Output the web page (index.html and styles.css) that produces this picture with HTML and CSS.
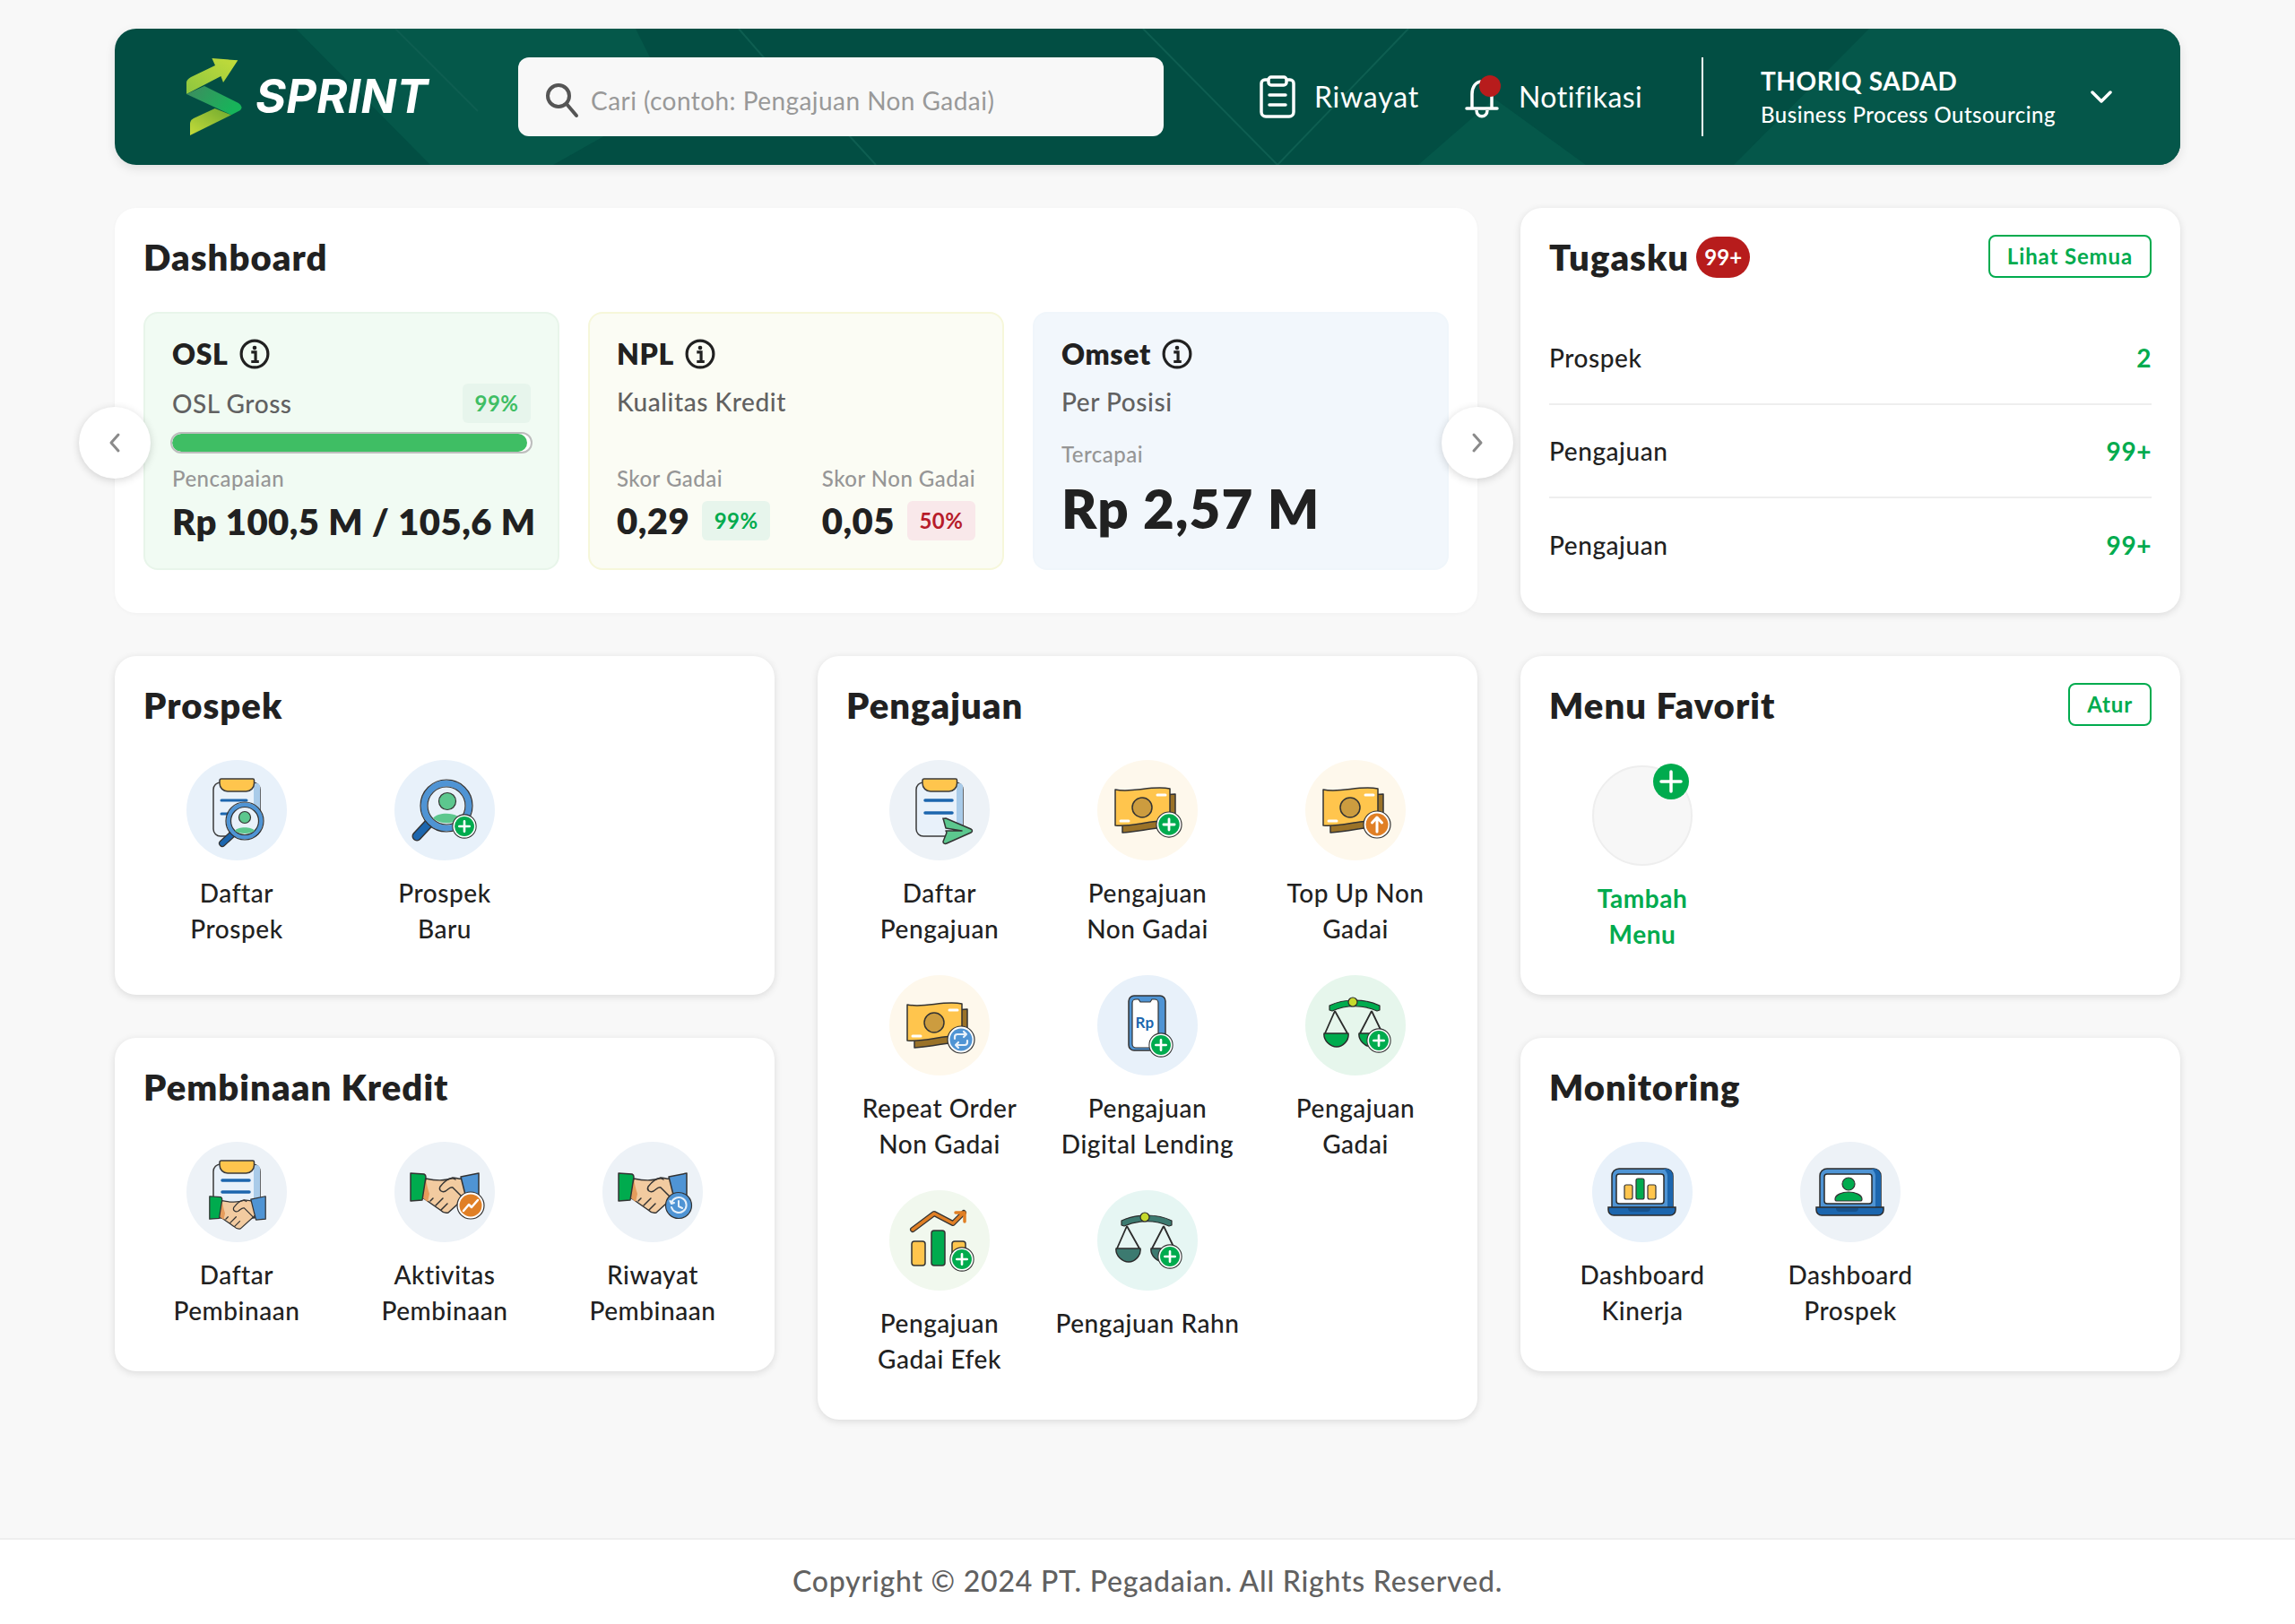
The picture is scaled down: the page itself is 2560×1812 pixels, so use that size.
FILE: index.html
```html
<!DOCTYPE html>
<html lang="id">
<head>
<meta charset="utf-8">
<title>SPRINT</title>
<link rel="stylesheet" href="styles.css">
</head>
<body>
<svg class="defs" width="0" height="0" aria-hidden="true">
  <defs>
    <linearGradient id="gA" x1="0" y1="1" x2="1" y2="0"><stop offset="0" stop-color="#8cc63f"/><stop offset="1" stop-color="#c4dc3a"/></linearGradient>
    <linearGradient id="gB" x1="0" y1="0" x2="1" y2="0.4"><stop offset="0" stop-color="#3f8a5f"/><stop offset="1" stop-color="#17b45a"/></linearGradient>
    <linearGradient id="gC" x1="1" y1="0" x2="0" y2="1"><stop offset="0" stop-color="#6fa92f"/><stop offset="1" stop-color="#c4dc3a"/></linearGradient>

    <symbol id="clip" viewBox="0 0 112 112">
      <rect x="30" y="25" width="52" height="60" rx="8" fill="#e8f1fa" stroke="#3a3a3a" stroke-width="1.5"/>
      <path d="M75 26h3a4 4 0 0 1 4 4v47a7 7 0 0 1-7 7z" fill="#a9cbe9"/>
      <path d="M39 21h35a1.500 1.500 0 0 1 1.500 1.500V26a9 9 0 0 1-9 9H46a9 9 0 0 1-9-9v-3a2 2 0 0 1 2-2z" fill="#ffc54d" stroke="#3a3a3a" stroke-width="1.500"/>
    </symbol>

    <symbol id="plus" viewBox="0 0 32 32">
      <circle cx="16" cy="16" r="15" fill="#fff" stroke="#333" stroke-width="1.200"/>
      <circle cx="16" cy="16" r="12.500" fill="#00ab4e"/>
      <path d="M16 9.500v13M9.500 16h13" stroke="#fff" stroke-width="3" stroke-linecap="round"/>
    </symbol>

    <symbol id="money" viewBox="0 0 112 112">
      <path d="M28 42l59-4v36c-18 0-38 6-59 7z" fill="#9a7228" stroke="#333" stroke-width="1.500" stroke-linejoin="round"/>
      <path d="M20 33c20 4 40-5 61-1v36c-20-2-40 7-61 5z" fill="#ffc54d" stroke="#333" stroke-width="1.500" stroke-linejoin="round"/>
      <ellipse cx="50" cy="53" rx="11" ry="11" fill="#cc9c3f" stroke="#333" stroke-width="1.500"/>
      <path d="M67 39h9M26 68h9" stroke="#fff" stroke-width="3" stroke-linecap="round"/>
    </symbol>

    <symbol id="hands" viewBox="0 0 112 112">
      <path d="M35 41c14 3 24 2 30-1 4 0 8 2 11 1l6 18-22 20c-4 1-7-1-9-3L31 62z" fill="#f2cba0" stroke="#333" stroke-width="1.500" stroke-linejoin="round"/>
      <path d="M35 42l-4 20 6 5 2-9c-2-6-3-11-4-16z" fill="#e59c5c"/>
      <path d="M68 42c-6-4-13 3-17 8-2 4 2 7 6 5 3-2 5-5 8-4l13 13M52 76l7-7M46 71l8-8M40 66l3-3" fill="none" stroke="#333" stroke-width="1.500" stroke-linecap="round" stroke-linejoin="round"/>
      <path d="M18 35l15 1c2 1 2 2 2 3l-4 26-13 1z" fill="#00ab4e" stroke="#333" stroke-width="1.500" stroke-linejoin="round"/>
      <path d="M74 39l20-4v31l-13 1z" fill="#4f94d4" stroke="#333" stroke-width="1.500" stroke-linejoin="round"/>
    </symbol>

    <symbol id="scale" viewBox="0 0 112 112">
      <path d="M33 40l-11 25M33 40l14 25M74 40l-13 25M74 40l12 25" fill="none" stroke="#2b2b2b" stroke-width="1.800"/>
      <path d="M27 34c16-8 40-8 56 0v5l-3 1c-15-7-35-7-50 0l-3-1z" fill="currentColor" stroke="#2b2b2b" stroke-width="1.200" stroke-linejoin="round"/>
      <circle cx="53" cy="30" r="5" fill="#c5d92d" stroke="#2b2b2b" stroke-width="1.200"/>
      <path d="M21 65h27c1 8-6 15-13 15s-15-7-14-15zM60 65h27c1 8-6 15-13 15s-15-7-14-15z" fill="currentColor" stroke="#2b2b2b" stroke-width="1.500" stroke-linejoin="round"/>
    </symbol>

    <symbol id="laptop" viewBox="0 0 112 112">
      <path d="M30 30h52a8 8 0 0 1 8 8v36H22V38a8 8 0 0 1 8-8z" fill="#4f94d4" stroke="#2b2b2b" stroke-width="1.500"/>
      <path d="M80 30h2a8 8 0 0 1 8 8v36h-6V38c0-3-2-6-4-8z" fill="#1c66ae"/>
      <rect x="27" y="36" width="53" height="33" rx="3" fill="#fff" stroke="#2b2b2b" stroke-width="1.500"/>
      <path d="M18 73h75v3a6 6 0 0 1-6 6H24a6 6 0 0 1-6-6z" fill="#1c66ae" stroke="#2b2b2b" stroke-width="1.500"/>
      <path d="M40 74h25c0 3-2 4-4 4H44c-2 0-4-1-4-4z" fill="#17528c"/>
    </symbol>
  </defs>
</svg>

<header class="topbar">
  <svg class="topbar-art" viewBox="0 0 2304 152" preserveAspectRatio="none" aria-hidden="true">
    <path d="M202 0H581L620 78 489 152H352z" fill="#05584a"/>
    <path d="M1454 152L1539 78 1641 152z" fill="#05584a"/>
    <path d="M1806 152L1957 0H2304V152z" fill="#05574a"/>
    <path d="M313 0l92 92M696 0l40 46M1147 0l150 152 146-152M818 118l31 34" fill="none" stroke="#0e5e51" stroke-width="2"/>
  </svg>
  <a class="logo">
    <svg class="logo-mark" viewBox="0 0 64 86" aria-hidden="true">
      <path d="M0 40V27Q0 24 5 21L32 8 28.400 0 57.300 2.300 41 27 38.400 20z" fill="url(#gA)"/>
      <path d="M0 40L20 31 58 50Q64 54 60 58L50 63.300z" fill="url(#gB)"/>
      <path d="M4 86V73Q4 69 8 67L31.700 56 50 63.300z" fill="url(#gC)"/>
    </svg>
    <span class="logo-text">SPRINT</span>
  </a>
  <label class="search">
    <svg class="search-icon" viewBox="0 0 38 40" aria-hidden="true">
      <circle cx="15" cy="15" r="12" fill="none" stroke="#555" stroke-width="4"/>
      <path d="M24 24l11 13" stroke="#555" stroke-width="4" stroke-linecap="round"/>
    </svg>
    <span class="search-hint">Cari (contoh: Pengajuan Non Gadai)</span>
  </label>
  <nav class="nav">
    <a class="nav-link">
      <svg class="nav-ic" viewBox="0 0 40 48" aria-hidden="true">
        <path d="M10 5H6a4 4 0 0 0-4 4v32a5 5 0 0 0 5 5h26a5 5 0 0 0 5-5V9a4 4 0 0 0-4-4h-4" fill="none" stroke="#fff" stroke-width="3.500"/>
        <rect x="10" y="2" width="20" height="9" rx="3" fill="none" stroke="#fff" stroke-width="3.500"/>
        <path d="M11 22h18M11 33h18" stroke="#fff" stroke-width="3.500" stroke-linecap="round"/>
      </svg>
      Riwayat
    </a>
    <a class="nav-link nav-link-bell">
      <span class="bell">
        <svg class="nav-ic" viewBox="0 0 40 48" aria-hidden="true">
          <path d="M9 37V21c0-8 4-14 11-14s11 6 11 14v16" fill="none" stroke="#fff" stroke-width="3.500"/>
          <path d="M3 37h34" stroke="#fff" stroke-width="3.500" stroke-linecap="round"/>
          <path d="M14 39c0 9 12 9 12 0" fill="none" stroke="#fff" stroke-width="3.500"/>
        </svg>
        <i class="bell-dot"></i>
      </span>
      Notifikasi
    </a>
  </nav>
  <div class="user">
    <div class="user-text">
      <div class="user-name">THORIQ SADAD</div>
      <div class="user-unit">Business Process Outsourcing</div>
    </div>
    <svg class="chev" viewBox="0 0 24 14" aria-hidden="true"><path d="M2 2l10 10L22 2" fill="none" stroke="#fff" stroke-width="3.500" stroke-linecap="round" stroke-linejoin="round"/></svg>
  </div>
</header>

<main class="board">
  <section class="card card-flat dash">
    <h2 class="card-title">Dashboard</h2>
    <button class="pager pager-l" aria-label="Sebelumnya"><svg viewBox="0 0 14 24"><path d="M11 3L3 12l8 9" fill="none" stroke="#8a8a8a" stroke-width="3" stroke-linecap="round" stroke-linejoin="round"/></svg></button>
    <button class="pager pager-r" aria-label="Berikutnya"><svg viewBox="0 0 14 24"><path d="M3 3l8 9-8 9" fill="none" stroke="#8a8a8a" stroke-width="3" stroke-linecap="round" stroke-linejoin="round"/></svg></button>
    <div class="metrics">
      <article class="metric metric-green">
        <h3 class="metric-title">OSL <svg class="info" viewBox="0 0 32 32"><circle cx="16" cy="16" r="14" fill="none" stroke="#212121" stroke-width="3"/><circle cx="16" cy="9.500" r="2.200" fill="#212121"/><path d="M12.500 14H17v10M12.500 24h8" fill="none" stroke="#212121" stroke-width="3"/></svg></h3>
        <div class="metric-row"><span class="metric-sub">OSL Gross</span><span class="pct pct-ok pct-light">99%</span></div>
        <div class="bar"><div class="bar-fill" style="width:99%"></div></div>
        <div class="metric-cap cap-osl">Pencapaian</div>
        <div class="metric-val">Rp 100,5 M / 105,6 M</div>
      </article>
      <article class="metric metric-yellow">
        <h3 class="metric-title">NPL <svg class="info" viewBox="0 0 32 32"><circle cx="16" cy="16" r="14" fill="none" stroke="#212121" stroke-width="3"/><circle cx="16" cy="9.500" r="2.200" fill="#212121"/><path d="M12.500 14H17v10M12.500 24h8" fill="none" stroke="#212121" stroke-width="3"/></svg></h3>
        <div class="metric-sub metric-sub-top">Kualitas Kredit</div>
        <div class="scores">
          <div class="score">
            <div class="metric-cap">Skor Gadai</div>
            <div class="score-row"><span class="metric-val">0,29</span><span class="pct pct-ok">99%</span></div>
          </div>
          <div class="score">
            <div class="metric-cap">Skor Non Gadai</div>
            <div class="score-row"><span class="metric-val">0,05</span><span class="pct pct-bad">50%</span></div>
          </div>
        </div>
      </article>
      <article class="metric metric-blue">
        <h3 class="metric-title">Omset <svg class="info" viewBox="0 0 32 32"><circle cx="16" cy="16" r="14" fill="none" stroke="#212121" stroke-width="3"/><circle cx="16" cy="9.500" r="2.200" fill="#212121"/><path d="M12.500 14H17v10M12.500 24h8" fill="none" stroke="#212121" stroke-width="3"/></svg></h3>
        <div class="metric-sub metric-sub-top">Per Posisi</div>
        <div class="metric-cap cap-omset">Tercapai</div>
        <div class="metric-big">Rp 2,57 M</div>
      </article>
    </div>
  </section>

  <section class="card tasks">
    <div class="card-head">
      <h2 class="card-title">Tugasku <span class="count">99+</span></h2>
      <a class="btn-line">Lihat Semua</a>
    </div>
    <ul class="task-list">
      <li class="task"><span>Prospek</span><b>2</b></li>
      <li class="task"><span>Pengajuan</span><b>99+</b></li>
      <li class="task"><span>Pengajuan</span><b>99+</b></li>
    </ul>
  </section>

  <section class="card prospek">
    <h2 class="card-title">Prospek</h2>
    <div class="menu">
      <a class="item"><span class="icon bg-blue"><svg viewBox="0 0 112 112">
        <use href="#clip"/>
        <path d="M39 45h28M39 60h10" stroke="#1c66ae" stroke-width="3" stroke-linecap="round"/>
        <path d="M52 82L40 93" stroke="#333" stroke-width="8" stroke-linecap="round"/><path d="M52 82L40 93" stroke="#1c66ae" stroke-width="5.500" stroke-linecap="round"/>
        <circle cx="65" cy="68" r="18" fill="#e8f1fa" stroke="#4f94d4" stroke-width="5"/><circle cx="65" cy="68" r="21" fill="none" stroke="#333" stroke-width="1.200"/><circle cx="65" cy="68" r="15.500" fill="none" stroke="#333" stroke-width="1.200"/>
        <circle cx="65" cy="64" r="6.500" fill="#5cc78e" stroke="#333" stroke-width="1.200"/>
        <path d="M54 79c3-5 19-5 22 0-5 4-17 4-22 0z" fill="#5cc78e"/>
      </svg></span><span class="item-label">Daftar<br>Prospek</span></a>
      <a class="item"><span class="icon bg-blue"><svg viewBox="0 0 112 112">
        <path d="M38 71L25 85" stroke="#333" stroke-width="11" stroke-linecap="round"/><path d="M38 71L25 85" stroke="#1c66ae" stroke-width="8" stroke-linecap="round"/>
        <circle cx="58" cy="51" r="25" fill="#e8f1fa" stroke="#4f94d4" stroke-width="7"/><circle cx="58" cy="51" r="29" fill="none" stroke="#333" stroke-width="1.200"/><circle cx="58" cy="51" r="21" fill="none" stroke="#333" stroke-width="1.200"/>
        <circle cx="59" cy="46" r="9.500" fill="#5cc78e" stroke="#333" stroke-width="1.200"/>
        <path d="M43 65c5-7 25-7 30 0-8 7-22 7-30 0z" fill="#5cc78e"/>
        <use href="#plus" x="64" y="60" width="28" height="28"/>
      </svg></span><span class="item-label">Prospek<br>Baru</span></a>
    </div>
  </section>

  <section class="card pengajuan">
    <h2 class="card-title">Pengajuan</h2>
    <div class="menu">
      <a class="item"><span class="icon bg-slate"><svg viewBox="0 0 112 112">
        <use href="#clip"/>
        <path d="M40 45h30M40 59h30" stroke="#1c66ae" stroke-width="3.500" stroke-linecap="round"/>
        <path d="M60 66c1-1 2-1 3-1l28 12c2 1 2 3 0 4L64 93c-2 1-4 0-4-2l4-10-1-2h18l-18-3-3-11z" fill="#5cc78e" stroke="#333" stroke-width="1.500" stroke-linejoin="round"/>
      </svg></span><span class="item-label">Daftar<br>Pengajuan</span></a>
      <a class="item"><span class="icon bg-cream"><svg viewBox="0 0 112 112">
        <use href="#money"/><use href="#plus" x="65" y="57" width="30" height="30"/>
      </svg></span><span class="item-label">Pengajuan<br>Non Gadai</span></a>
      <a class="item"><span class="icon bg-cream"><svg viewBox="0 0 112 112">
        <use href="#money"/>
        <circle cx="80" cy="72" r="15" fill="#fff" stroke="#333" stroke-width="1.200"/><circle cx="80" cy="72" r="12.500" fill="#e07f25"/>
        <path d="M80 80V65M74.500 70l5.500-6 5.500 6" fill="none" stroke="#fff" stroke-width="3" stroke-linecap="round" stroke-linejoin="round"/>
      </svg></span><span class="item-label">Top Up Non<br>Gadai</span></a>
      <a class="item"><span class="icon bg-cream"><svg viewBox="0 0 112 112">
        <use href="#money"/>
        <circle cx="80" cy="72" r="15" fill="#fff" stroke="#333" stroke-width="1.200"/><circle cx="80" cy="72" r="12.500" fill="#4f94d4"/>
        <path d="M73 71v-2a3 3 0 0 1 3-3h10M83 63l3 3-3 3M87 73v2a3 3 0 0 1-3 3H74M77 81l-3-3 3-3" fill="none" stroke="#e8f1fa" stroke-width="2.200" stroke-linecap="round" stroke-linejoin="round"/>
      </svg></span><span class="item-label">Repeat Order<br>Non Gadai</span></a>
      <a class="item"><span class="icon bg-blue"><svg viewBox="0 0 112 112">
        <rect x="35" y="23" width="41" height="61" rx="6" fill="#4f94d4" stroke="#333" stroke-width="1.500"/>
        <path d="M43 27h3l2 3h11l2-3h3a4 4 0 0 1 4 4v46a4 4 0 0 1-4 4H43a4 4 0 0 1-4-4V31a4 4 0 0 1 4-4z" fill="#fff" stroke="#333" stroke-width="1.200"/>
        <text class="rp" x="53" y="59" text-anchor="middle">Rp</text>
        <use href="#plus" x="57" y="64" width="28" height="28"/>
      </svg></span><span class="item-label">Pengajuan<br>Digital Lending</span></a>
      <a class="item"><span class="icon bg-green"><svg viewBox="0 0 112 112">
        <use href="#scale" class="c-green"/><use href="#plus" x="68" y="59" width="28" height="28"/>
      </svg></span><span class="item-label">Pengajuan<br>Gadai</span></a>
      <a class="item"><span class="icon bg-lime"><svg viewBox="0 0 112 112">
        <path d="M26 44l24-18 21 11 12-12" fill="none" stroke="#333" stroke-width="6" stroke-linecap="round" stroke-linejoin="round"/>
        <path d="M26 44l24-18 21 11 12-12M74 25h10v10" fill="none" stroke="#e07f25" stroke-width="3.500" stroke-linecap="round" stroke-linejoin="round"/>
        <rect x="25" y="57" width="15" height="27" rx="3" fill="#ffc54d" stroke="#333" stroke-width="1.500"/>
        <rect x="47" y="45" width="15" height="39" rx="3" fill="#00ab4e" stroke="#333" stroke-width="1.500"/>
        <rect x="70" y="57" width="15" height="27" rx="3" fill="#ffc54d" stroke="#333" stroke-width="1.500"/>
        <use href="#plus" x="67" y="63" width="28" height="28"/>
      </svg></span><span class="item-label">Pengajuan<br>Gadai Efek</span></a>
      <a class="item"><span class="icon bg-teal"><svg viewBox="0 0 112 112">
        <use href="#scale" class="c-teal"/><use href="#plus" x="67" y="60" width="28" height="28"/>
      </svg></span><span class="item-label">Pengajuan Rahn</span></a>
    </div>
  </section>

  <section class="card favorit">
    <div class="card-head">
      <h2 class="card-title">Menu Favorit</h2>
      <a class="btn-line">Atur</a>
    </div>
    <div class="menu">
      <a class="item item-add"><span class="icon icon-empty"><svg class="add-badge" viewBox="0 0 40 40"><circle cx="20" cy="20" r="20" fill="#00ab4e"/><path d="M20 9v22M9 20h22" stroke="#fff" stroke-width="3.500" stroke-linecap="round"/></svg></span><span class="item-label">Tambah<br>Menu</span></a>
    </div>
  </section>

  <section class="card pembinaan">
    <h2 class="card-title">Pembinaan Kredit</h2>
    <div class="menu">
      <a class="item"><span class="icon bg-slate"><svg viewBox="0 0 112 112">
        <use href="#clip"/>
        <path d="M40 43h30M40 56h30" stroke="#1c66ae" stroke-width="3.500" stroke-linecap="round"/>
        <use href="#hands" x="11" y="32" width="92" height="92"/>
      </svg></span><span class="item-label">Daftar<br>Pembinaan</span></a>
      <a class="item"><span class="icon bg-slate"><svg viewBox="0 0 112 112">
        <use href="#hands"/>
        <circle cx="85" cy="71" r="15" fill="#fff" stroke="#333" stroke-width="1.200"/><circle cx="85" cy="71" r="12.500" fill="#e07f25"/>
        <path d="M77 77l6-7 3 3 7-8" fill="none" stroke="#fff" stroke-width="2.500" stroke-linecap="round" stroke-linejoin="round"/>
      </svg></span><span class="item-label">Aktivitas<br>Pembinaan</span></a>
      <a class="item"><span class="icon bg-slate"><svg viewBox="0 0 112 112">
        <use href="#hands"/>
        <circle cx="85" cy="71" r="14.500" fill="#4f94d4" stroke="#333" stroke-width="1.200"/>
        <path d="M77 68a8.500 8.500 0 1 1 0 5M85 66v6l4 2M75.500 66l1.500 3 3-1" fill="none" stroke="#e8f1fa" stroke-width="2" stroke-linecap="round" stroke-linejoin="round"/>
      </svg></span><span class="item-label">Riwayat<br>Pembinaan</span></a>
    </div>
  </section>

  <section class="card monitoring">
    <h2 class="card-title">Monitoring</h2>
    <div class="menu">
      <a class="item"><span class="icon bg-blue"><svg viewBox="0 0 112 112">
        <use href="#laptop"/>
        <rect x="36" y="48" width="9" height="16" rx="2" fill="#ffc54d" stroke="#333" stroke-width="1.200"/>
        <rect x="49" y="41" width="9" height="23" rx="2" fill="#00ab4e" stroke="#333" stroke-width="1.200"/>
        <rect x="62" y="48" width="9" height="16" rx="2" fill="#ffc54d" stroke="#333" stroke-width="1.200"/>
      </svg></span><span class="item-label">Dashboard<br>Kinerja</span></a>
      <a class="item"><span class="icon bg-slate"><svg viewBox="0 0 112 112">
        <use href="#laptop"/>
        <circle cx="54" cy="47" r="7" fill="#00ab4e" stroke="#333" stroke-width="1.200"/>
        <path d="M39 64c0-5 8-8 15-8s15 3 15 8c0 1-1 2-2 2H41c-1 0-2-1-2-2z" fill="#00ab4e" stroke="#333" stroke-width="1.200"/>
      </svg></span><span class="item-label">Dashboard<br>Prospek</span></a>
    </div>
  </section>
</main>

<footer class="footer">Copyright © 2024 PT. Pegadaian. All Rights Reserved.</footer>
</body>
</html>
```
FILE: styles.css
```css
* { box-sizing: border-box; letter-spacing: .02em; }
html, body { margin: 0; padding: 0; }
body {
  min-height: 1812px;
  display: flex;
  flex-direction: column;
  background: #f8f8f8;
  color: #212121;
  font-family: "Lato", "Noto Sans", sans-serif;
  font-size: 28px;
  font-weight: 500;
}
a { color: inherit; text-decoration: none; }
.defs { position: absolute; }

/* top bar */
.topbar {
  position: relative;
  overflow: hidden;
  display: flex;
  align-items: center;
  height: 152px;
  margin: 32px 128px 0;
  padding-left: 80px;
  background: #024e43;
  border-radius: 24px;
  color: #fff;
  box-shadow: 0 4px 12px rgba(0, 0, 0, .1);
}
.topbar-art { position: absolute; inset: 0; width: 100%; height: 100%; }
.logo { position: relative; flex: 0 0 370px; display: flex; align-items: center; gap: 13px; }
.logo-mark { width: 64px; height: 86px; }
.logo-text {
  font-family: "Inter", sans-serif;
  font-size: 52px;
  font-weight: 700;
  font-style: italic;
  letter-spacing: .005em;
  line-height: 1;
}
.search {
  position: relative;
  flex: 0 0 720px;
  height: 88px;
  display: flex;
  align-items: center;
  gap: 13px;
  padding: 8px 0 0 30px;
  background: #f8f8f8;
  border-radius: 12px;
}
.search-icon { width: 38px; height: 40px; }
.search-hint { color: #999; font-size: 28px; font-weight: 400; letter-spacing: .016em; }
.nav { position: relative; display: flex; margin-left: 107px; }
.nav-link { display: flex; align-items: center; gap: 21px; font-size: 32px; line-height: 48px; font-weight: 400; letter-spacing: .025em; }
.nav-link-bell { margin-left: 50px; letter-spacing: .015em; }
.nav-ic { display: block; width: 40px; height: 48px; }
.bell { position: relative; display: block; }
.bell-dot {
  position: absolute;
  top: 0;
  left: 17px;
  width: 24px;
  height: 24px;
  border-radius: 50%;
  background: #b71c1c;
}
.user {
  position: absolute;
  left: 1770px;
  top: 32px;
  height: 88px;
  width: 534px;
  display: flex;
  align-items: center;
  padding-left: 64px;
  border-left: 2px solid #fff;
}
.user-text { flex: 0 0 368px; }
.user-name { font-size: 28px; font-weight: 700; line-height: 40px; }
.user-unit { font-size: 24px; line-height: 36px; }
.chev { width: 24px; height: 14px; }

/* board */
.board {
  display: grid;
  grid-template-columns: repeat(3, 736px);
  grid-template-rows: auto auto auto 1fr;
  gap: 48px;
  margin: 48px 128px 0;
  align-items: stretch;
}
.card {
  position: relative;
  padding: 32px;
  background: #fff;
  border-radius: 24px;
  box-shadow: 0 2px 8px rgba(0, 0, 0, .12);
}
.card-flat { box-shadow: 0 1px 4px rgba(0, 0, 0, .03); }
.dash { grid-column: 1 / span 2; grid-row: 1; }
.tasks { grid-column: 3; grid-row: 1; padding-bottom: 24px; }
.prospek { grid-column: 1; grid-row: 2; }
.pengajuan { grid-column: 2; grid-row: 2 / span 3; }
.favorit { grid-column: 3; grid-row: 2; }
.pembinaan { grid-column: 1; grid-row: 3; }
.monitoring { grid-column: 3; grid-row: 3; }

.card-title {
  display: flex;
  align-items: center;
  gap: 8px;
  margin: 0 0 38px;
  font-size: 40px;
  font-weight: 800;
  line-height: 46px;
  letter-spacing: .026em;
}
.card-head { display: flex; justify-content: space-between; align-items: flex-start; }
.btn-line {
  height: 48px;
  margin-top: -2px;
  padding: 0 19px;
  border: 2px solid #00ab4e;
  border-radius: 8px;
  color: #00ab4e;
  font-size: 24px;
  font-weight: 700;
  line-height: 44px;
  letter-spacing: .036em;
}
.count {
  padding: 0 8px;
  height: 46px;
  min-width: 60px;
  border-radius: 23px;
  background: #b71c1c;
  color: #fff;
  font-size: 24px;
  font-weight: 700;
  line-height: 46px;
  letter-spacing: 0;
  text-align: center;
}

/* dashboard metrics */
.metrics { display: grid; grid-template-columns: repeat(3, 464px); gap: 32px; }
.metric { height: 288px; padding: 26px 30px; border-radius: 16px; border: 2px solid transparent; }
.metric-green { background: #f1fbf3; border-color: #e8f5ea; }
.metric-yellow { background: #fbfcf4; border-color: #f6f7da; }
.metric-blue { background: #f2f7fc; border-color: #f0f6fb; }
.metric-title {
  display: flex;
  align-items: center;
  gap: 12px;
  margin: 0;
  font-size: 32px;
  font-weight: 800;
  line-height: 38px;
}
.info { width: 34px; height: 34px; }
.metric-row { display: flex; justify-content: space-between; align-items: center; height: 44px; margin-top: 14px; }
.metric-sub { color: #616161; font-size: 28px; line-height: 40px; }
.metric-sub-top { margin-top: 14px; }
.pct { flex: 0 0 76px; height: 44px; border-radius: 6px; font-size: 24px; font-weight: 700; line-height: 44px; text-align: center; }
.pct-ok { background: #e7f5ec; color: #00ab4e; }
.pct-light { color: #3fbe64; }
.pct-bad { background: #f9e8ea; color: #b71c2a; }
.bar { height: 24px; margin: 10px -2px 0; border: 2px solid #bdbdbd; border-radius: 12px; background: #fff; overflow: hidden; }
.bar-fill { height: 100%; background: #3fbe64; border-radius: 10px; }
.metric-cap { color: #969696; font-size: 24px; line-height: 32px; }
.cap-osl { margin-top: 12px; }
.cap-omset { margin-top: 23px; }
.metric-val { display: block; font-size: 40px; font-weight: 800; line-height: 48px; margin-top: 8px; letter-spacing: .012em; white-space: nowrap; }
.metric-big { font-size: 60px; font-weight: 800; line-height: 76px; margin-top: 6px; white-space: nowrap; }
.scores { display: flex; justify-content: space-between; margin-top: 50px; }
.score-row { display: flex; align-items: center; gap: 14px; margin-top: 7px; }
.score-row .metric-val { margin-top: 0; }
.pager {
  position: absolute;
  top: 222px;
  z-index: 2;
  width: 80px;
  height: 80px;
  padding: 0;
  display: flex;
  align-items: center;
  justify-content: center;
  border: 0;
  border-radius: 50%;
  background: #fff;
  box-shadow: 0 2px 10px rgba(0, 0, 0, .16);
}
.pager svg { width: 14px; height: 24px; }
.pager-l { left: -40px; }
.pager-r { right: -40px; }

/* tasks */
.task-list { list-style: none; margin: 0; padding: 0; }
.task {
  display: flex;
  justify-content: space-between;
  align-items: center;
  height: 104px;
  border-bottom: 2px solid #eee;
  font-size: 28px;
}
.task:last-child { border-bottom: 0; }
.task b { color: #00ab4e; font-weight: 700; }

/* menu grids */
.menu { display: grid; grid-template-columns: repeat(3, 232px); row-gap: 32px; margin: 0 -12px; }
.card.prospek, .card.pembinaan, .card.monitoring, .card.favorit, .card.pengajuan { padding-bottom: 48px; }
.item { display: flex; flex-direction: column; align-items: center; gap: 16px; }
.item-label { font-size: 28px; line-height: 40px; text-align: center; white-space: nowrap; }
.icon { position: relative; display: block; width: 112px; height: 112px; border-radius: 50%; }
.icon > svg { display: block; width: 112px; height: 112px; }
.bg-blue { background: #e8f1fa; }
.bg-slate { background: #edf2f7; }
.bg-cream { background: #fef8ec; }
.bg-green { background: #e6f6ec; }
.bg-lime { background: #f1f8ee; }
.bg-teal { background: #e6f6f3; }
.c-green { color: #00ab4e; }
.c-teal { color: #3c7a70; }
.rp { fill: #1c66ae; font-size: 17px; font-weight: 700; }
.item-add { margin-top: 6px; color: #00ab4e; }
.item-add .item-label { font-weight: 700; }
.icon-empty { background: #f7f7f7; border: 2px solid #eee; }
.icon > svg.add-badge { position: absolute; top: -4px; right: 2px; width: 40px; height: 40px; }

/* footer */
.footer {
  margin-top: auto;
  height: 96px;
  background: #fff;
  border-top: 2px solid #eee;
  color: #616161;
  font-size: 32px;
  line-height: 92px;
  letter-spacing: .024em;
  text-align: center;
}
```
